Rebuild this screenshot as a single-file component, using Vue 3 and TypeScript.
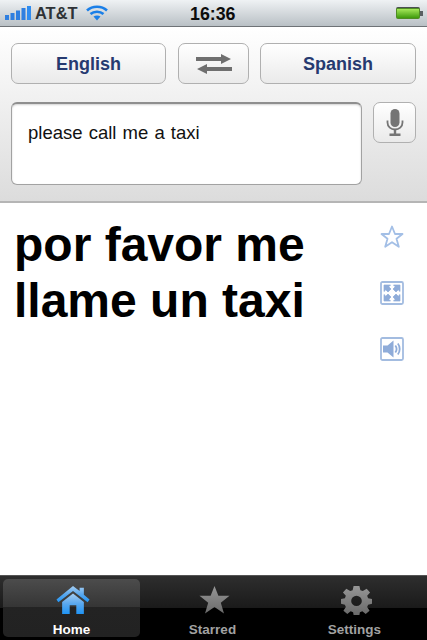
<script setup lang="ts">
const tabs = [
  { id: 'home', label: 'Home' },
  { id: 'starred', label: 'Starred' },
  { id: 'settings', label: 'Settings' },
]
</script>

<template>
  <div class="phone">
    <div class="status">
      <div class="status-left">
        <svg class="bars" width="26" height="14" viewBox="0 0 26 14">
          <rect x="0" y="9" width="4" height="5" fill="#2f7fe0" />
          <rect x="5.500" y="7" width="4" height="7" fill="#2f7fe0" />
          <rect x="11" y="4.500" width="4" height="9.500" fill="#2f7fe0" />
          <rect x="16.500" y="2" width="4" height="12" fill="#2f7fe0" />
          <rect x="22" y="0" width="4" height="14" fill="#2f8cf0" />
        </svg>
        <span class="carrier">AT&amp;T</span>
        <svg class="wifi" width="22" height="16" viewBox="0 0 22 16">
          <path d="M1 5.500C6.500 0.500 15.500 0.500 21 5.500" fill="none" stroke="#1a7fe8" stroke-width="2.600" />
          <path d="M4.500 9C8 6 14 6 17.500 9" fill="none" stroke="#1a7fe8" stroke-width="2.600" />
          <path d="M7.500 11.500C9.500 10 12.500 10 14.500 11.500L11 15.500Z" fill="#1a7fe8" />
        </svg>
      </div>
      <span class="clock">16:36</span>
      <div class="battery">
        <div class="battery-fill"></div>
      </div>
    </div>

    <header class="head">
      <div class="lang-row">
        <button class="btn lang">English</button>
        <button class="btn swap">
          <svg width="36" height="20" viewBox="0 0 36 20">
            <path d="M0 3H25V0L35 5L25 10V7H0Z" fill="#6f6f6f" />
            <path d="M36 13H11V10L1 15L11 20V17H36Z" fill="#6f6f6f" />
          </svg>
        </button>
        <button class="btn lang">Spanish</button>
      </div>
      <div class="input-row">
        <div class="input">please call me a taxi</div>
        <button class="btn mic">
          <svg width="18" height="28" viewBox="0 0 18 28">
            <rect x="4.500" y="0" width="9" height="18" rx="4.500" fill="#757575" />
            <path d="M1.500 11.500V13.500C1.500 18 5 20.500 9 20.500C13 20.500 16.500 18 16.500 13.500V11.500" fill="none" stroke="#757575" stroke-width="1.800" />
            <rect x="7.800" y="20" width="2.400" height="5" fill="#757575" />
            <rect x="3.500" y="24.500" width="11" height="2.500" fill="#757575" />
          </svg>
        </button>
      </div>
    </header>

    <main class="result">
      <div class="result-text">por favor me llame un taxi</div>
      <div class="actions">
        <svg width="24" height="24" viewBox="0 0 24 24">
          <path d="M12 1.500L15 9H22.500L16.500 13.800L18.800 21.800L12 17.200L5.200 21.800L7.500 13.800L1.500 9H9Z" fill="#fff" stroke="#a3bfe6" stroke-width="1.800" stroke-linejoin="round" />
        </svg>
        <svg width="24" height="24" viewBox="0 0 24 24">
          <rect x="1" y="1" width="22" height="22" rx="1.500" fill="#fff" stroke="#a3bce0" stroke-width="1.800" />
          <g fill="#8facd9" stroke="#8facd9" stroke-width="0.700">
            <path d="M4 4H10.500L8.800 5.800L11 8L8 11L5.800 8.800L4 10.500Z" />
            <path d="M20 4V10.500L18.200 8.800L16 11L13 8L15.200 5.800L13.500 4Z" />
            <path d="M4 20V13.500L5.800 15.200L8 13L11 16L8.800 18.200L10.500 20Z" />
            <path d="M20 20H13.500L15.200 18.200L13 16L16 13L18.200 15.200L20 13.500Z" />
          </g>
        </svg>
        <svg width="24" height="24" viewBox="0 0 24 24">
          <rect x="1" y="1" width="22" height="22" rx="1.500" fill="#fff" stroke="#a3bce0" stroke-width="1.800" />
          <path d="M3 8.500H7.500L13.500 3.500V20.500L7.500 15.500H3Z" fill="#8facd9" />
          <path d="M15.300 8.500C16.800 10.500 16.800 13.500 15.300 15.500M17.800 6.500C20.300 9.500 20.300 14.500 17.800 17.500" fill="none" stroke="#8facd9" stroke-width="1.800" />
        </svg>
      </div>
    </main>

    <nav class="tabs">
      <div v-for="tab in tabs" :key="tab.id" class="tab" :class="{ active: tab.id === 'home' }">
        <svg v-if="tab.id === 'home'" class="tab-icon" width="34" height="30" viewBox="0 0 36 32" preserveAspectRatio="none">
          <defs>
            <linearGradient id="homeFill" x1="0" y1="0" x2="0" y2="1">
              <stop offset="0" stop-color="#a5cdf2" />
              <stop offset="0.5" stop-color="#5aa8ee" />
              <stop offset="1" stop-color="#1f94f5" />
            </linearGradient>
          </defs>
          <path d="M0.500 15.500L18 1L25 6.500V3H29.500V10.500L35.500 15.500L33.500 18.500L18 6.500L2.500 18.500Z" fill="url(#homeFill)" />
          <path d="M6.500 18L18 9L29.500 18V31H21.500V21.500H14.500V31H6.500Z" fill="url(#homeFill)" />
        </svg>
        <svg v-else-if="tab.id === 'starred'" class="tab-icon" width="31" height="30" viewBox="0 0 32 32" preserveAspectRatio="none">
          <defs>
            <linearGradient id="greyFill" x1="0" y1="0" x2="0" y2="1">
              <stop offset="0" stop-color="#969696" />
              <stop offset="1" stop-color="#6a6a6a" />
            </linearGradient>
          </defs>
          <path d="M16 1L20 11.500H31.500L22.500 18.800L25.800 30.500L16 23.500L6.200 30.500L9.500 18.800L0.500 11.500H12Z" fill="url(#greyFill)" />
        </svg>
        <svg v-else class="tab-icon" width="31" height="30" viewBox="0 0 32 32" preserveAspectRatio="none">
          <defs>
            <linearGradient id="gearFill" x1="0" y1="0" x2="0" y2="1">
              <stop offset="0" stop-color="#969696" />
              <stop offset="1" stop-color="#6a6a6a" />
            </linearGradient>
          </defs>
          <path fill-rule="evenodd" fill="url(#gearFill)" d="M13 1H19L20 5.500L22.500 6.500L26.500 4L30 8L27 11.500L28 14L32 15V20L28 21L27 23.500L29.500 27.500L25.500 31L22 28L19.500 29L19 32H13L12.500 29L10 28L6.500 31L2.500 27.500L5 23.500L4 21L0 20V15L4 14L5 11.500L2 8L5.500 4L9.500 6.500L12 5.500ZM16 11.500A5.500 5.500 0 1 0 16 22.500A5.500 5.500 0 1 0 16 11.500Z" />
        </svg>
        <span class="tab-label">{{ tab.label }}</span>
      </div>
    </nav>
  </div>
</template>

<style>
html,
body {
  margin: 0;
  background: #fff;
}
</style>

<style scoped>
.phone {
  width: 427px;
  height: 640px;
  display: flex;
  flex-direction: column;
  overflow: hidden;
  font-family: "Liberation Sans", Arial, sans-serif;
}

.status {
  height: 27px;
  flex: none;
  box-sizing: border-box;
  position: relative;
  display: flex;
  align-items: center;
  justify-content: space-between;
  padding: 0 4px 0 5px;
  background: linear-gradient(#eff2f4, #b9c0c5);
  border-bottom: 1px solid #6e7276;
}
.status-left {
  display: flex;
  align-items: center;
}
.carrier {
  margin-left: 4px;
  font-size: 16.400px;
  font-weight: 700;
  color: #2e3236;
}
.wifi {
  margin-left: 9px;
}
.clock {
  position: absolute;
  left: 190px;
  top: 4px;
  font-size: 17.800px;
  font-weight: 700;
  color: #0c0c0c;
}
.battery {
  position: relative;
  width: 24px;
  height: 12px;
  box-sizing: border-box;
  margin-right: 3px;
  padding: 1px;
  border-top: 1px solid #4a4f52;
  border-radius: 2px;
  background: #4f8c24;
}
.battery::after {
  content: "";
  position: absolute;
  right: -3px;
  top: 3px;
  width: 3px;
  height: 5px;
  background: #5a5f62;
}
.battery-fill {
  width: 100%;
  height: 100%;
  background: linear-gradient(#a5e85a, #3f9a0c);
}

.head {
  height: 176px;
  flex: none;
  box-sizing: border-box;
  padding: 16px 11px 0;
  background: linear-gradient(#ffffff, #dcdcdc);
  border-bottom: 2px solid #b5b5b5;
}
.lang-row {
  display: grid;
  grid-template-columns: 155px 72px 156px;
  column-gap: 11px;
}
.btn {
  box-sizing: border-box;
  display: flex;
  align-items: center;
  justify-content: center;
  padding: 0;
  height: 41px;
  border: 1.500px solid #b0b0b0;
  border-radius: 7px;
  background: linear-gradient(#ffffff, #eaeaea);
  font-family: inherit;
}
.lang {
  padding-top: 2px;
  font-size: 18px;
  font-weight: 700;
  color: #263a70;
}
.swap {
  margin-left: 1px;
}
.input-row {
  display: flex;
  gap: 11px;
  margin-top: 18px;
}
.input {
  flex: 1;
  height: 83px;
  box-sizing: border-box;
  padding: 19px 16px 0;
  background: #fff;
  border: 1.500px solid #a2a2a2;
  border-top: 2px solid #8f8f8f;
  border-radius: 6px;
  box-shadow: inset 0 1px 2px rgba(0, 0, 0, 0.18);
  font-size: 18.500px;
  line-height: 20px;
  color: #111;
  word-spacing: 1px;
}
.mic {
  width: 43px;
  flex: none;
}

.result {
  flex: 1;
  display: flex;
  justify-content: space-between;
  padding: 14px 23px 0 14px;
  background: #fff;
}
.result-text {
  width: 330px;
  font-size: 48px;
  line-height: 56px;
  font-weight: 700;
  color: #000;
}
.actions {
  display: flex;
  flex-direction: column;
  gap: 32px;
  padding: 8px 0 0;
}

.tabs {
  height: 65px;
  flex: none;
  box-sizing: border-box;
  padding: 3px;
  display: grid;
  grid-template-columns: 137px 145px 139px;
  background: linear-gradient(#2e2e2e, #1a1a1a 50%, #000 50%);
  border-top: 1px solid #555;
}
.tab {
  display: flex;
  flex-direction: column;
  align-items: center;
  justify-content: flex-end;
  border-radius: 5px;
}
.tab.active {
  background: linear-gradient(#4c4c4c, #353535 48%, #232323 48%, #222);
}
.tab-icon {
  margin: 0 0 7px 3px;
  flex: none;
}
.tab-label {
  font-size: 13.500px;
  line-height: 15px;
  font-weight: 700;
  color: #a2a2a2;
}
.tab.active .tab-label {
  color: #fff;
}
</style>
